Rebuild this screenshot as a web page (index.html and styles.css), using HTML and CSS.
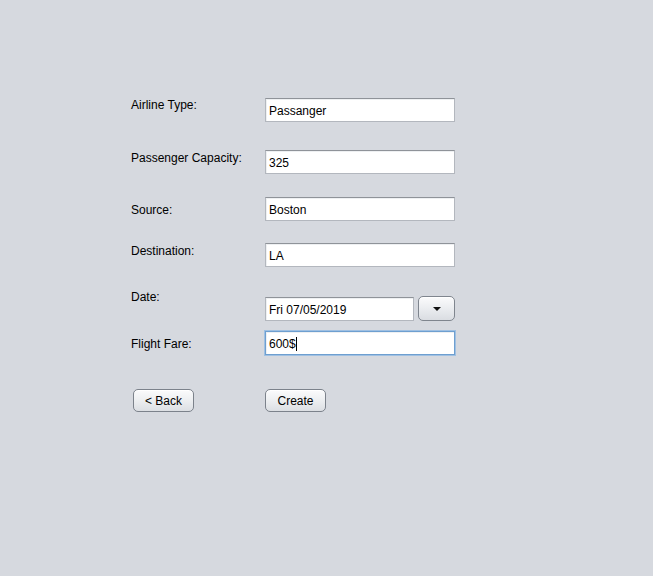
FILE: index.html
```html
<!DOCTYPE html>
<html>
<head>
<meta charset="utf-8">
<link rel="stylesheet" href="styles.css">
</head>
<body>
<div class="form">
  <div class="row r1">
    <div class="label">Airline Type:</div>
    <div class="field f1">Passanger</div>
  </div>
  <div class="row r2">
    <div class="label">Passenger Capacity:</div>
    <div class="field">325</div>
  </div>
  <div class="row r3">
    <div class="label l5">Source:</div>
    <div class="field">Boston</div>
  </div>
  <div class="row r4">
    <div class="label">Destination:</div>
    <div class="field">LA</div>
  </div>
  <div class="row r5">
    <div class="label">Date:</div>
    <div class="date">
      <div class="field datefield">Fri 07/05/2019</div>
      <div class="drop"><span class="tri"></span></div>
    </div>
  </div>
  <div class="row r6">
    <div class="label l5">Flight Fare:</div>
    <div class="field focus">600$<span class="caret"></span></div>
  </div>
  <div class="row r7">
    <div class="btncell"><div class="btn back">&lt; Back</div></div>
    <div class="btn">Create</div>
  </div>
</div>
</body>
</html>
```
FILE: styles.css
```css
html, body {
  margin: 0;
  padding: 0;
  background: #d6d9df;
  width: 653px;
  height: 576px;
  overflow: hidden;
}
body {
  font-family: "Liberation Sans", Arial, sans-serif;
  font-size: 12px;
  color: #000;
}
.form {
  display: flex;
  flex-direction: column;
  padding: 97px 0 0 131px;
}
.row {
  display: flex;
  align-items: flex-start;
}
.r2 { margin-top: 28px; }
.r3 { margin-top: 23px; }
.r4 { margin-top: 22px; }
.r5 { margin-top: 22px; }
.r6 { margin-top: 10px; }
.r7 { margin-top: 34px; }
.label {
  width: 134px;
  line-height: 14px;
  padding-top: 1px;
  white-space: nowrap;
}
.l5 { margin-top: 5px; }
.field {
  box-sizing: border-box;
  width: 190px;
  height: 24px;
  background: #fff;
  border: 1px solid #b3b7be;
  border-top-color: #8f9399;
  box-shadow: inset 1px 1px 0 #eef0f2;
  padding: 5px 3px 3px;
  line-height: 14px;
  white-space: nowrap;
  display: flex;
  align-items: flex-start;
}
.f1 { margin-top: 1px; }
.r5 .date {
  display: flex;
  align-items: flex-start;
  margin-top: 7px;
}
.datefield {
  width: 149px;
  margin-top: 1px;
}
.drop {
  box-sizing: border-box;
  width: 37px;
  height: 25px;
  margin-left: 4px;
  border: 1px solid #7f858e;
  border-radius: 5px;
  background: linear-gradient(#fbfbfc 0%, #eceef1 45%, #dadde2 100%);
  box-shadow: inset 0 1px 0 #ffffff;
  display: flex;
  align-items: center;
  justify-content: center;
}
.tri {
  width: 0;
  height: 0;
  border-left: 4px solid transparent;
  border-right: 4px solid transparent;
  border-top: 4px solid #111;
}
.focus {
  border: 1px solid #6e9fd0;
  box-shadow: 0 0 0 1px #9fc0e2, inset 1px 1px 0 #eef0f2;
}
.caret {
  display: inline-block;
  width: 1px;
  height: 14px;
  background: #000;
}
.btncell {
  width: 132px;
  padding-left: 2px;
}
.btn {
  box-sizing: border-box;
  width: 61px;
  height: 23px;
  border: 1px solid #7c828b;
  border-radius: 5px;
  background: linear-gradient(#fbfbfc 0%, #eef0f2 45%, #dcdfe3 100%);
  box-shadow: inset 0 1px 0 #ffffff;
  display: flex;
  align-items: center;
  justify-content: center;
  line-height: 14px;
}
```
